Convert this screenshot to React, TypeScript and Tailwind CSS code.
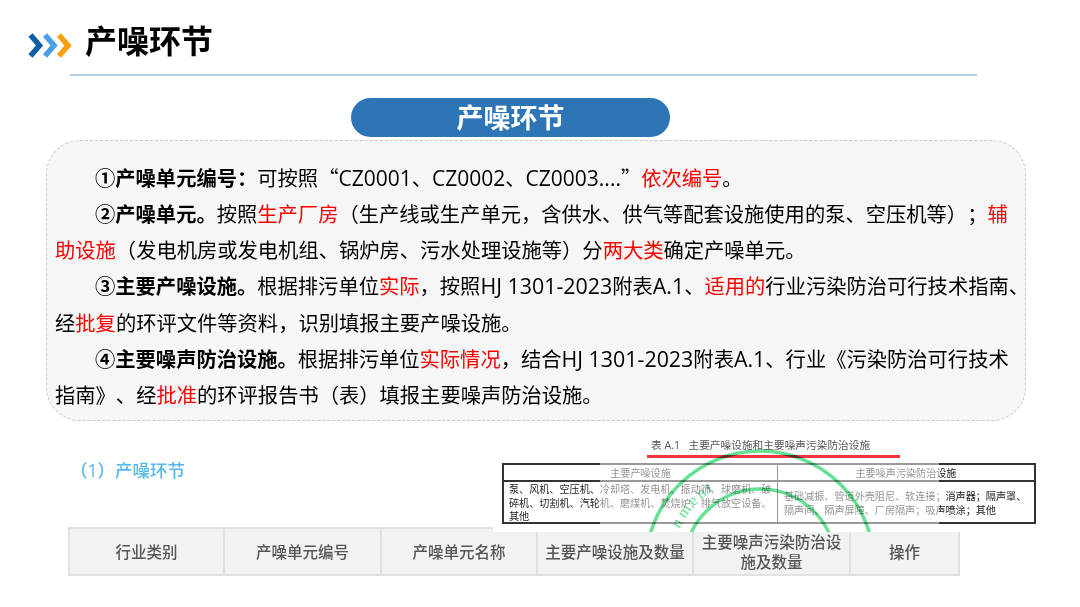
import type { ReactNode } from "react";

const R = ({ children }: { children: ReactNode }) => <span className="text-[#ff0000]">{children}</span>;
const B = ({ children }: { children: ReactNode }) => <b className="font-bold">{children}</b>;
const L = ({ children }: { children: ReactNode }) => <span className="text-[21px]">{children}</span>;
const H = ({ children }: { children: ReactNode }) => <span className="text-[21.4px]">{children}</span>;
const Q = ({ children }: { children: ReactNode }) => <span className="font-['Noto_Sans_CJK_SC',sans-serif]">{children}</span>;

const cols = [
  { w: "w-[155px]", t: "行业类别" },
  { w: "w-[157px]", t: "产噪单元编号" },
  { w: "w-[156px]", t: "产噪单元名称" },
  { w: "w-[156px]", t: "主要产噪设施及数量" },
  { w: "w-[157px]", t: "主要噪声污染防治设施及数量" },
  { w: "w-[107px]", t: "操作" },
];

export default function App() {
  return (
    <div className="relative flex h-[607px] w-[1080px] flex-col overflow-hidden bg-white font-['Open_Sans','Noto_Sans_CJK_SC',sans-serif] text-black">
      <header className="flex h-[74px] items-start pl-[27px] pt-[22px]">
        <svg width="45" height="27" viewBox="0 0 45 27" className="mt-[10px]">
          <path d="M3.5 3 L12.5 13.5 L3.5 24" fill="none" stroke="#0e5ea4" strokeWidth="5.5" />
          <path d="M18 3 L27 13.5 L18 24" fill="none" stroke="#4a9fe5" strokeWidth="5.5" />
          <path d="M32 3 L41 13.5 L32 24" fill="none" stroke="#f99f0c" strokeWidth="5.5" />
        </svg>
        <h1 className="ml-[13px] text-[32px] font-bold leading-[38px]">产噪环节</h1>
      </header>
      <div className="ml-[70px] h-[1.5px] w-[907px] bg-[#b4cdea]" />
      <div className="ml-[351px] mt-[22.5px] flex h-[39px] w-[319px] items-center justify-center rounded-full bg-[#2e75b6] text-[27px] font-bold leading-none text-white">
        产噪环节
      </div>
      <section className="ml-[46px] mt-[3px] h-[281px] w-[980px] whitespace-nowrap rounded-[34px] border border-dashed border-[#c8c8c8] bg-[#f6f6f6] pl-[8px] pt-[17.5px] text-[20.3px] leading-[36.3px] [text-spacing-trim:space-all]">
        <p className="indent-[40px]"><B>①产噪单元编号：</B>可按照<Q>“</Q><L>CZ0001</L>、<L>CZ0002</L>、<L>CZ0003....</L><Q>”</Q><R>依次编号</R>。</p>
        <p className="indent-[40px]"><B>②产噪单元。</B>按照<R>生产厂房</R>（生产线或生产单元，含供水、供气等配套设施使用的泵、空压机等）；<R>辅</R></p>
        <p><R>助设施</R>（发电机房或发电机组、锅炉房、污水处理设施等）分<R>两大类</R>确定产噪单元。</p>
        <p className="indent-[40px]"><B>③主要产噪设施。</B>根据排污单位<R>实际</R>，按照<H>HJ 1301-2023</H>附表<H>A.1</H>、<R>适用的</R>行业污染防治可行技术指南、</p>
        <p>经<R>批复</R>的环评文件等资料，识别填报主要产噪设施。</p>
        <p className="indent-[40px]"><B>④主要噪声防治设施。</B>根据排污单位<R>实际情况</R>，结合<H>HJ 1301-2023</H>附表<H>A.1</H>、行业《污染防治可行技术</p>
        <p>指南》、经<R>批准</R>的环评报告书（表）填报主要噪声防治设施。</p>
      </section>
      <div className="relative flex-1">
        <div className="ml-[70px] mt-[39px] text-[17.5px] font-medium leading-[20px] text-[#58b7e8] blur-[0.3px]">（1）产噪环节</div>
        <div className="ml-[68px] mt-[47px] flex h-[49px] w-[892px] border-2 border-[#e2e0e1] bg-[#f3f1f2] blur-[0.3px]">
          {cols.map((c, i) => (
            <div key={c.t} className={`${c.w} flex shrink-0 items-center justify-center px-[6px] text-center text-[15.5px] font-medium leading-[20px] text-[#555] ${i < 5 ? "border-r-2 border-[#e2e0e1]" : ""}`}>
              {c.t}
            </div>
          ))}
        </div>
        <div className="absolute left-[493px] top-[14px] h-[97px] w-[560px] bg-white">
          <div className="absolute left-[9px] top-[28px] w-[534px] border-2 border-[#333] text-[10.1px] leading-[13.7px] text-[#222] blur-[0.25px]">
            <div className="flex h-[17px] border-b-2 border-[#333] text-center leading-[16px]">
              <div className="w-[274px] border-r border-[#333]">主要产噪设施</div>
              <div className="flex-1">主要噪声污染防治设施</div>
            </div>
            <div className="flex h-[40px]">
              <div className="w-[274px] border-r border-[#333] pl-[5px] pt-[1px]">泵、风机、空压机、冷却塔、发电机、振动筛、球磨机、破碎机、切割机、汽轮机、磨煤机、焚烧炉、排气放空设备、其他</div>
              <div className="flex-1 pl-[6px] pr-[2px] pt-[8px]">基础减振、管道外壳阻尼、软连接；消声器；隔声罩、隔声间、隔声屏障、厂房隔声；吸声喷涂；其他</div>
            </div>
          </div>
          <div className="absolute bottom-0 left-[107px] top-0 w-[339px] bg-white/50" />
          <div className="absolute left-[158px] top-[3px] whitespace-pre text-[10.7px] leading-[14px] text-[#555] blur-[0.25px]">表 A.1   主要产噪设施和主要噪声污染防治设施</div>
          <div className="absolute left-[154px] top-[20px] h-[3px] w-[253px] bg-[#f6343e]" />
          <svg width="560" height="97" className="absolute left-0 top-0 mix-blend-multiply">
            <defs>
              <path id="wm" d="M 179 130 A 88 88 0 0 1 267 42" />
            </defs>
            <circle cx="267" cy="130" r="114" fill="none" stroke="#66e095" strokeWidth="3.5" />
            <circle cx="267" cy="130" r="76" fill="none" stroke="#66e095" strokeWidth="3.5" />
            <text fill="#66e095" fontSize="16" letterSpacing="3" fontFamily="Liberation Serif, serif">
              <textPath href="#wm" startOffset="37">nment</textPath>
            </text>
          </svg>
        </div>
      </div>
    </div>
  );
}
